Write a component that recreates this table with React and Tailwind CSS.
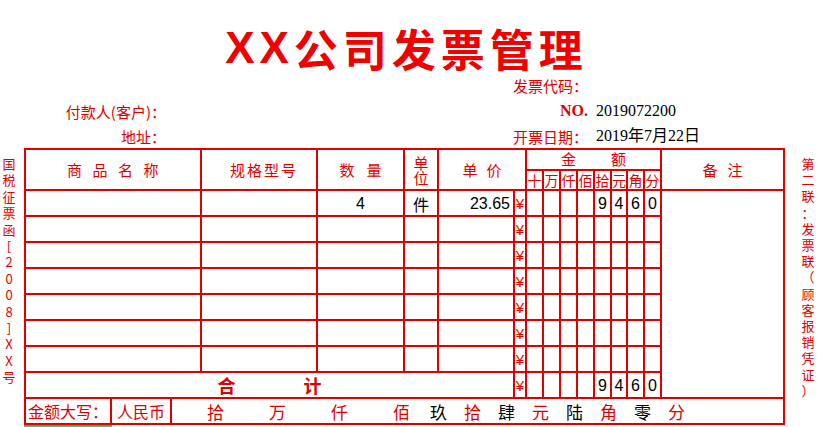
import React from 'react';

const headDigits = ['十', '万', '仟', '佰', '拾', '元', '角', '分'];
const amount = ['', '', '', '', '9', '4', '6', '0'];
const blank = ['', '', '', '', '', '', '', ''];

const rows = [
  { qty: '4', unit: '件', price: '23.65', digits: amount },
  { digits: blank },
  { digits: blank },
  { digits: blank },
  { digits: blank },
  { digits: blank },
  { digits: blank },
];

const leftSide = '国税征票函[2008]XX号'.split('');
const rightSide = '第二联：发票联（顾客报销凭证）'.split('');

// 大写金额: units red, digits black
const capsA = ['拾', '万', '仟', '佰'];
const capsB = [
  { c: '玖', red: false },
  { c: '拾', red: true },
  { c: '肆', red: false },
  { c: '元', red: true },
  { c: '陆', red: false },
  { c: '角', red: true },
  { c: '零', red: false },
  { c: '分', red: true },
];

const Cell = ({ className = '', children }) => (
  <div className={`bg-white flex items-center justify-center leading-none ${className}`}>{children}</div>
);

const Yen = () => (
  <Cell className="text-[#e00000] text-[15px] pt-[1px] font-['Liberation_Sans',sans-serif]">¥</Cell>
);

export default function App() {
  return (
    <div className="w-[819px] h-[427px] bg-white overflow-hidden font-['Noto_Sans_CJK_SC',sans-serif]">
      {/* Title */}
      <div className="h-[72px] pt-[26px] pr-[6px] flex justify-center leading-none text-[44px] font-bold text-[#f00000] tracking-[5px]">
        <span className="font-['Liberation_Sans',sans-serif]">XX</span>
        <span>公司发票管理</span>
      </div>

      {/* Header info */}
      <div className="h-[26px] flex items-center text-[15px] leading-none text-[#e00000]">
        <div className="w-[166px]" />
        <div className="w-[422px] flex justify-end">发票代码：</div>
      </div>
      <div className="h-[26px] flex items-center text-[15px] leading-none text-[#e00000]">
        <div className="w-[166px] flex justify-end">付款人(客户)：</div>
        <div className="w-[422px] flex justify-end font-['Liberation_Serif',serif] font-bold text-[16px]">NO.</div>
        <div className="pl-[8px] text-black text-[16px] font-['Liberation_Serif','Noto_Sans_CJK_SC',serif]">2019072200</div>
      </div>
      <div className="h-[24px] flex items-center text-[15px] leading-none text-[#e00000]">
        <div className="w-[166px] flex justify-end">地址：</div>
        <div className="w-[422px] flex justify-end">开票日期：</div>
        <div className="pl-[8px] text-black text-[16px] font-['Liberation_Serif','Noto_Sans_CJK_SC',serif]">2019年7月22日</div>
      </div>

      <div className="flex">
        {/* Left side note */}
        <div className="w-[24px] pr-[6px] pt-[8px] flex flex-col items-center text-[13px] leading-[16.4px] text-[#e00000]">
          {leftSide.map((c, i) => (
            <span key={i}>{c}</span>
          ))}
        </div>

        <div className="w-[761px]">
          <div className="grid grid-cols-[174px_114px_85px_32px_74px_10px_15px_15px_15px_15px_15px_14px_15px_15px_121px] grid-rows-[19px_18px_repeat(9,24px)] gap-[2px] p-[2px] bg-[#e00000] text-[#e00000]">
            {/* Header */}
            <Cell className="row-span-2 text-[15px] tracking-[10.5px] pl-[10px]">商品名称</Cell>
            <Cell className="row-span-2 text-[15px] tracking-[2px] pl-[10px]">规格型号</Cell>
            <Cell className="row-span-2 text-[15px] tracking-[12px] pl-[12px]">数量</Cell>
            <Cell className="row-span-2 flex-col text-[15px] leading-[19px]">
              <span>单</span>
              <span>位</span>
            </Cell>
            <Cell className="row-span-2 col-span-2 text-[15px] tracking-[9px] pl-[9px]">单价</Cell>
            <Cell className="col-span-8 text-[15px] gap-[35px] pb-[3px]">
              <span>金</span>
              <span>额</span>
            </Cell>
            <Cell className="row-span-2 text-[15px] tracking-[10px] pl-[10px]">备注</Cell>
            {headDigits.map((d, i) => (
              <Cell key={i} className="text-[14px]">{d}</Cell>
            ))}

            {/* Items */}
            {rows.map((r, i) => (
              <React.Fragment key={i}>
                <Cell />
                <Cell />
                <Cell className="text-black text-[16px] font-['Liberation_Sans',sans-serif] pt-[2px]">{r.qty}</Cell>
                <Cell className="text-black text-[16px] pt-[1px]">{r.unit}</Cell>
                <Cell className="justify-end pr-[3px] pt-[2px] text-black text-[16px] font-['Liberation_Sans',sans-serif]">{r.price}</Cell>
                <Yen />
                {r.digits.map((d, j) => (
                  <Cell key={j} className="text-black text-[16px] font-['Liberation_Sans',sans-serif] pt-[2px]">{d}</Cell>
                ))}
                {i === 0 && <Cell className="row-span-8" />}
              </React.Fragment>
            ))}

            {/* Total */}
            <Cell className="col-span-5 gap-[68px] text-[18px] font-bold">
              <span>合</span>
              <span>计</span>
            </Cell>
            <Yen />
            {amount.map((d, j) => (
              <Cell key={j} className="text-black text-[16px] font-['Liberation_Sans',sans-serif] pt-[2px]">{d}</Cell>
            ))}

            {/* Amount in words */}
            <div className="col-span-15 flex gap-[2px] bg-[#e00000]">
              <Cell className="w-[84px] justify-start pl-[2px] text-[16px]">金额大写：</Cell>
              <Cell className="w-[58px] text-[16px]">人民币</Cell>
              <Cell className="flex-1 justify-start pl-[35px] text-[17px]">
                <div className="flex gap-[45px]">
                  {capsA.map((c, i) => (
                    <span key={i}>{c}</span>
                  ))}
                </div>
                <div className="flex gap-[17px] ml-[20px]">
                  {capsB.map((x, i) => (
                    <span key={i} className={x.red ? 'text-[#e00000]' : 'text-black'}>
                      {x.c}
                    </span>
                  ))}
                </div>
              </Cell>
            </div>
          </div>
          <div className="h-[2px] w-[88px] bg-[#4caf50]" />
        </div>

        {/* Right side note */}
        <div className="w-[34px] pl-[12px] pt-[8px] flex flex-col items-center text-[13px] leading-[16.2px] text-[#e00000]">
          {rightSide.map((c, i) => (
            <span key={i}>{c}</span>
          ))}
        </div>
      </div>
    </div>
  );
}
